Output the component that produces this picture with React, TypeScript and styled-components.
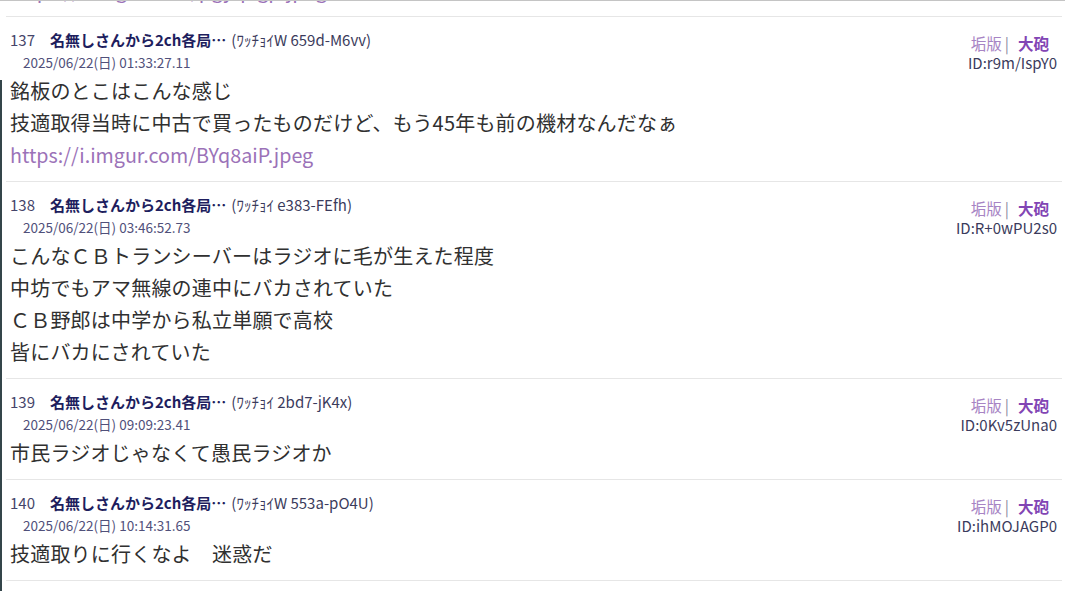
import React from "react";
import styled, { createGlobalStyle } from "styled-components";

const Global = createGlobalStyle`
  html, body { margin: 0; padding: 0; background: #ffffff; }
  body {
    font-family: "Noto Sans CJK JP", "Noto Sans", sans-serif;
    color: #2b2b2b;
    overflow: hidden;
  }
  body::before {
    content: "";
    position: fixed;
    left: 0;
    top: 80px;
    bottom: 0;
    width: 2px;
    background: #34454a;
  }
`;

const Page = styled.div`
  border-top: 1px solid #c4c4c4;
  height: 590px;
  overflow: hidden;
`;

const List = styled.div`
  margin: 0 3px 0 6px;
`;

const Tail = styled.div`
  height: 15px;
  overflow: hidden;
  border-bottom: 1px solid #e6e6e6;
  padding-left: 4px;
`;

const TailLine = styled.div`
  margin-top: -27px;
  font-size: 20px;
  line-height: 32px;
  color: #9b72b8;
`;

const Post = styled.div`
  padding: 11px 5px 10px 4px;
  border-bottom: 1px solid #e6e6e6;
`;

const Head = styled.div`
  display: flex;
  justify-content: space-between;
  align-items: flex-start;
`;

const HeadLeft = styled.div`
  display: flex;
  flex-direction: column;
`;

const NameLine = styled.div`
  display: flex;
  align-items: baseline;
  height: 23px;
  line-height: 23px;
  white-space: nowrap;
`;

const Num = styled.span`
  font-size: 15px;
  color: #45456a;
  width: 40px;
`;

const Name = styled.span`
  font-size: 15px;
  font-weight: 700;
  color: #1e1e5e;
`;

const Trip = styled.span`
  font-size: 15px;
  color: #3b3b5c;
  margin-left: 5px;
`;

const DateLine = styled.div`
  height: 23px;
  line-height: 23px;
  font-size: 13.5px;
  color: #50507a;
  padding-left: 13px;
`;

const HeadRight = styled.div`
  display: flex;
  flex-direction: column;
  align-items: flex-end;
  padding-top: 5px;
`;

const Actions = styled.div`
  display: flex;
  align-items: baseline;
  height: 20px;
  line-height: 20px;
  font-size: 15.5px;
  padding-right: 8px;
  white-space: nowrap;
`;

const Ban = styled.span`
  color: #a784c4;
`;

const Pipe = styled.span`
  color: #8a8aa0;
  margin: 0 9px 0 3px;
`;

const Cannon = styled.span`
  color: #8245b4;
  font-weight: 700;
`;

const IdLine = styled.div`
  height: 20px;
  line-height: 20px;
  font-size: 15px;
  color: #3b3b5c;
`;

const Body = styled.div`
  margin-top: 1px;
  font-size: 20px;
  line-height: 32px;
  color: #303030;
  letter-spacing: 0.2px;
  white-space: nowrap;
`;

const Line = styled.div``;

const Link = styled.a`
  color: #9b72b8;
  text-decoration: none;
  letter-spacing: 0;
  font-size: 19.7px;
`;

type PostData = {
  num: number;
  trip: string;
  date: string;
  id: string;
  lines: { text: string; link?: boolean }[];
};

const posts: PostData[] = [
  {
    num: 137,
    trip: "(ﾜｯﾁｮｲW 659d-M6vv)",
    date: "2025/06/22(日) 01:33:27.11",
    id: "ID:r9m/IspY0",
    lines: [
      { text: "銘板のとこはこんな感じ" },
      { text: "技適取得当時に中古で買ったものだけど、もう45年も前の機材なんだなぁ" },
      { text: "https://i.imgur.com/BYq8aiP.jpeg", link: true },
    ],
  },
  {
    num: 138,
    trip: "(ﾜｯﾁｮｲ e383-FEfh)",
    date: "2025/06/22(日) 03:46:52.73",
    id: "ID:R+0wPU2s0",
    lines: [
      { text: "こんなＣＢトランシーバーはラジオに毛が生えた程度" },
      { text: "中坊でもアマ無線の連中にバカされていた" },
      { text: "ＣＢ野郎は中学から私立単願で高校" },
      { text: "皆にバカにされていた" },
    ],
  },
  {
    num: 139,
    trip: "(ﾜｯﾁｮｲ 2bd7-jK4x)",
    date: "2025/06/22(日) 09:09:23.41",
    id: "ID:0Kv5zUna0",
    lines: [{ text: "市民ラジオじゃなくて愚民ラジオか" }],
  },
  {
    num: 140,
    trip: "(ﾜｯﾁｮｲW 553a-pO4U)",
    date: "2025/06/22(日) 10:14:31.65",
    id: "ID:ihMOJAGP0",
    lines: [{ text: "技適取りに行くなよ　迷惑だ" }],
  },
];

export default function App() {
  return (
    <>
      <Global />
      <Page>
        <List>
          <Tail>
            <TailLine>https://i.imgur.com/pgyqXgp.jpeg</TailLine>
          </Tail>
          {posts.map((p) => (
            <Post key={p.num}>
              <Head>
                <HeadLeft>
                  <NameLine>
                    <Num>{p.num}</Num>
                    <Name>名無しさんから2ch各局…</Name>
                    <Trip>{p.trip}</Trip>
                  </NameLine>
                  <DateLine>{p.date}</DateLine>
                </HeadLeft>
                <HeadRight>
                  <Actions>
                    <Ban>垢版</Ban>
                    <Pipe>|</Pipe>
                    <Cannon>大砲</Cannon>
                  </Actions>
                  <IdLine>{p.id}</IdLine>
                </HeadRight>
              </Head>
              <Body>
                {p.lines.map((l, i) =>
                  l.link ? (
                    <Line key={i}>
                      <Link href="#">{l.text}</Link>
                    </Line>
                  ) : (
                    <Line key={i}>{l.text}</Line>
                  )
                )}
              </Body>
            </Post>
          ))}
        </List>
      </Page>
    </>
  );
}
